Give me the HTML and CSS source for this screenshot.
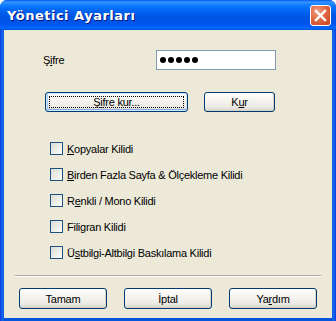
FILE: index.html
```html
<!DOCTYPE html>
<html lang="tr">
<head>
    <meta charset="UTF-8">
    <meta name="viewport" content="width=device-width, initial-scale=1.0">
    <title>Yönetici Ayarları</title>
    <link rel="stylesheet" href="styles.css">
</head>
<body>
    <div class="window">
        <!-- başlık çubuğu -->
        <div class="titlebar">
            <span class="title">Yönetici Ayarları</span>
            <span class="close-btn">
                <svg width="13" height="13" viewBox="0 0 13 13">
                    <path d="M2 2 L11 11 M11 2 L2 11" stroke="#fff" stroke-width="2.4" stroke-linecap="square"/>
                </svg>
            </span>
        </div>

        <div class="client">
            <div class="pw-row">
                <label class="pw-label">Ş<u>i</u>fre</label>
                <div class="textbox"><span class="dot"></span><span class="dot"></span><span class="dot"></span><span class="dot"></span><span class="dot"></span></div>
            </div>

            <div class="set-row">
                <button class="btn btn-focus btn-set"><span class="focus-rect"><span>Ş<u>i</u>fre kur...</span></span></button>
                <button class="btn btn-kur"><span>K<u>u</u>r</span></button>
            </div>

            <div class="checks">
                <label class="check"><span class="box"></span><span><u>K</u>opyalar Kilidi</span></label>
                <label class="check"><span class="box"></span><span><u>B</u>irden Fazla Sayfa &amp; Ölçekleme Kilidi</span></label>
                <label class="check"><span class="box"></span><span>R<u>e</u>nkli / Mono Kilidi</span></label>
                <label class="check"><span class="box"></span><span>Filigran Kilidi</span></label>
                <label class="check"><span class="box"></span><span>Ü<u>s</u>tbilgi-Altbilgi Baskılama Kilidi</span></label>
            </div>

            <div class="separator"></div>

            <div class="bottom-row">
                <button class="btn btn-bottom">Tamam</button>
                <button class="btn btn-bottom">İptal</button>
                <button class="btn btn-bottom"><span>Ya<u>r</u>dım</span></button>
            </div>
        </div>
    </div>
</body>
</html>
```

FILE: styles.css
```css
/* temel */
body {
    margin: 0;
    font-family: "Liberation Sans", Arial, sans-serif;
    font-size: 11px;
    letter-spacing: -0.25px;
    color: #000;
}

u {
    text-decoration: underline;
    text-underline-offset: 1px;
}

/* pencere çerçevesi */
.window {
    width: 336px;
    height: 321px;
    box-sizing: border-box;
    background: linear-gradient(to right, #0831D9 0, #166AEE 2px, #0855DD 4px, #0855DD 332px, #166AEE 334px, #0831D9 336px);
    border-radius: 7px 7px 0 0;
    display: flex;
    flex-direction: column;
}

.titlebar {
    height: 30px;
    flex-shrink: 0;
    display: flex;
    align-items: center;
    justify-content: space-between;
    padding: 0 5px 0 7px;
    border-radius: 7px 7px 0 0;
    background: linear-gradient(to bottom, #0058EE 0, #3A93FF 2px, #288EFF 3px, #127DFF 5px, #036FFC 8px, #0262EE 12px, #0057E5 16px, #0054E3 20px, #0055EB 24px, #005BF5 26px, #026AFE 28px, #0062EF 29px, #0043CF 30px);
}

.title {
    color: #fff;
    font-family: "DejaVu Sans", Verdana, sans-serif;
    font-weight: bold;
    font-size: 13px;
    letter-spacing: 0.5px;
    text-shadow: 1px 1px 0 #0A1883;
}

.close-btn {
    width: 19px;
    height: 19px;
    border: 1px solid #fff;
    border-radius: 3px;
    background: radial-gradient(circle at 35% 30%, #F0A080 0, #E06A45 45%, #C8401D 100%);
    display: flex;
    align-items: center;
    justify-content: center;
    margin-top: 1px;
}

/* istemci alanı */
.client {
    flex: 1;
    margin: 0 4px 3px 4px;
    background: #ECE9D8;
    padding-top: 20px;
}

.pw-row {
    display: flex;
    align-items: center;
    padding-left: 39px;
    height: 20px;
}

.pw-label {
    width: 113px;
}

.textbox {
    box-sizing: border-box;
    width: 120px;
    height: 20px;
    border: 1px solid #7F9DB9;
    background: #fff;
    display: flex;
    align-items: center;
    gap: 2px;
    padding-left: 3px;
}

.dot {
    width: 6px;
    height: 6px;
    border-radius: 50%;
    background: #000;
}

.set-row {
    display: flex;
    gap: 16px;
    padding-left: 41px;
    margin-top: 22px;
}

/* XP düğmeleri */
.btn {
    box-sizing: border-box;
    height: 20px;
    padding: 0;
    font: inherit;
    letter-spacing: inherit;
    color: #000;
    border: 1px solid #003C74;
    border-radius: 3px;
    background: linear-gradient(to bottom, #FFFFFF 0, #F5F4EF 40%, #ECEBE6 75%, #E0DED5 90%, #D6D0C5 100%);
    box-shadow: inset -1px -1px 0 #D6D0C5;
    display: flex;
    align-items: center;
    justify-content: center;
}

.btn-focus {
    box-shadow: inset 0 0 0 1px #CEE7FF, inset 0 -1px 0 1px #89ADE4, inset 1px 0 0 1px #A6CAF0;
}

.focus-rect {
    display: flex;
    align-items: center;
    justify-content: center;
    box-sizing: border-box;
    width: calc(100% - 6px);
    height: calc(100% - 6px);
    border: 1px dotted #000;
}

.btn-set {
    width: 143px;
}

.btn-kur {
    width: 71px;
}

/* onay kutuları */
.checks {
    display: flex;
    flex-direction: column;
    gap: 13px;
    margin-top: 30px;
    padding-left: 46px;
}

.check {
    display: flex;
    align-items: center;
    gap: 4px;
    height: 13px;
}

.box {
    box-sizing: border-box;
    width: 13px;
    height: 13px;
    border: 1px solid #1C5180;
    background: linear-gradient(135deg, #DCDCD7 0, #F0F0EA 60%, #FFFFFF 100%);
    flex-shrink: 0;
}

.separator {
    margin: 16px 11px 0 11px;
    height: 1px;
    background: #ACA899;
    border-bottom: 1px solid #fff;
}

.bottom-row {
    display: flex;
    gap: 17px;
    padding-left: 15px;
    margin-top: 11px;
}

.btn-bottom {
    width: 88px;
    height: 21px;
}
```
